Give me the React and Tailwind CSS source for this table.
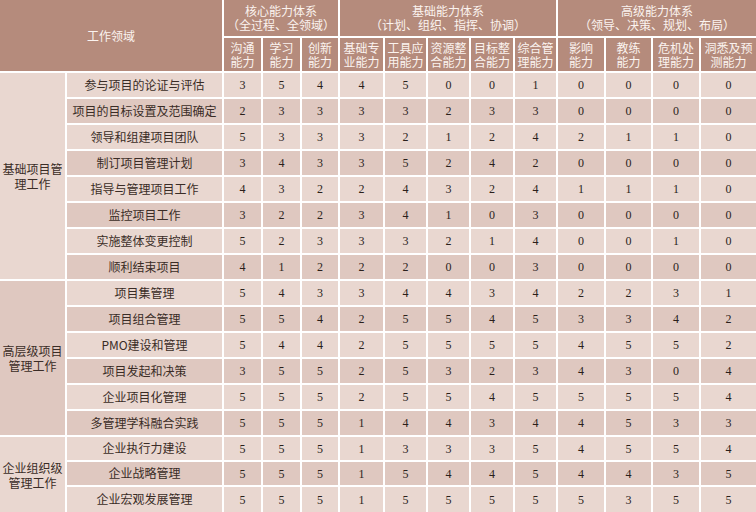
import React from "react";

const groups = [
  {
    name: "基础项目管理工作",
    catBg: "bg-[#e9d7d0]",
    rows: [
      ["参与项目的论证与评估", [3, 5, 4, 4, 5, 0, 0, 1, 0, 0, 0, 0]],
      ["项目的目标设置及范围确定", [2, 3, 3, 3, 3, 2, 3, 3, 0, 0, 0, 0]],
      ["领导和组建项目团队", [5, 3, 3, 3, 2, 1, 2, 4, 2, 1, 1, 0]],
      ["制订项目管理计划", [3, 4, 3, 3, 5, 2, 4, 2, 0, 0, 0, 0]],
      ["指导与管理项目工作", [4, 3, 2, 2, 4, 3, 2, 4, 1, 1, 1, 0]],
      ["监控项目工作", [3, 2, 2, 3, 4, 1, 0, 3, 0, 0, 0, 0]],
      ["实施整体变更控制", [5, 2, 3, 3, 3, 2, 1, 4, 0, 0, 1, 0]],
      ["顺利结束项目", [4, 1, 2, 2, 2, 0, 0, 3, 0, 0, 0, 0]],
    ],
  },
  {
    name: "高层级项目管理工作",
    catBg: "bg-[#dfc8c0]",
    rows: [
      ["项目集管理", [5, 4, 3, 3, 4, 4, 3, 4, 2, 2, 3, 1]],
      ["项目组合管理", [5, 5, 4, 2, 5, 5, 4, 5, 3, 3, 4, 2]],
      ["PMO建设和管理", [5, 4, 4, 2, 5, 5, 5, 5, 4, 5, 5, 2]],
      ["项目发起和决策", [3, 5, 5, 2, 5, 3, 2, 3, 4, 3, 0, 4]],
      ["企业项目化管理", [5, 5, 5, 2, 5, 5, 4, 5, 5, 5, 5, 4]],
      ["多管理学科融合实践", [5, 5, 5, 1, 4, 4, 3, 4, 4, 5, 3, 3]],
    ],
  },
  {
    name: "企业组织级管理工作",
    catBg: "bg-[#e9d7d0]",
    rows: [
      ["企业执行力建设", [5, 5, 5, 1, 3, 3, 3, 5, 4, 5, 5, 4]],
      ["企业战略管理", [5, 5, 5, 1, 5, 4, 4, 5, 4, 4, 3, 5]],
      ["企业宏观发展管理", [5, 5, 5, 1, 5, 5, 5, 5, 5, 3, 5, 5]],
    ],
  },
];

const sub = [
  ["沟通", "能力"],
  ["学习", "能力"],
  ["创新", "能力"],
  ["基础专", "业能力"],
  ["工具应", "用能力"],
  ["资源整", "合能力"],
  ["目标整", "合能力"],
  ["综合管", "理能力"],
  ["影响", "能力"],
  ["教练", "能力"],
  ["危机处", "理能力"],
  ["洞悉及预", "测能力"],
];

const widths = [66, 157, 39, 39, 38, 45, 43, 43, 44, 43, 48, 47, 48, 56];

const cjk = { fontFamily: '"Noto Sans CJK SC", "Noto Sans", sans-serif' };
const serif = { fontFamily: '"Liberation Serif", "Noto Sans CJK SC", serif' };

function Two({ a, b }) {
  return (
    <div className="flex flex-col items-center">
      <span className="block leading-[14px]">{a}</span>
      <span className="block leading-[14px]">{b}</span>
    </div>
  );
}

export default function App() {
  let idx = 0;
  const heights = [];
  for (let i = 0; i < 17; i++) heights.push(i < 14 ? "h-[26px]" : i === 16 ? "h-[26px]" : "h-[25px]");
  return (
    <div className="w-[756px] h-[512px] overflow-hidden bg-[#e9d7d0]">
      <table
        className="w-[756px] table-fixed border-collapse border-hidden text-[12px] leading-[14px]"
        style={cjk}
      >
        <colgroup>
          {widths.map((w, i) => (
            <col key={i} style={{ width: w }} />
          ))}
        </colgroup>
        <thead>
          <tr className="h-[37px] bg-[#b58b7c] text-[#fbf3ef]">
            <th colSpan={2} rowSpan={2} className="border-2 border-white font-normal text-center align-middle">
              工作领域
            </th>
            <th colSpan={3} className="border-2 border-white font-normal text-center align-middle">
              <Two a="核心能力体系" b="（全过程、全领域）" />
            </th>
            <th colSpan={5} className="border-2 border-white font-normal text-center align-middle">
              <Two a="基础能力体系" b="（计划、组织、指挥、协调）" />
            </th>
            <th colSpan={4} className="border-2 border-white font-normal text-center align-middle">
              <Two a="高级能力体系" b="（领导、决策、规划、布局）" />
            </th>
          </tr>
          <tr className="h-[35px] bg-[#b58b7c] text-[#fbf3ef]">
            {sub.map((s, i) => (
              <th key={i} className="border-2 border-white font-normal text-center align-middle px-0">
                <Two a={s[0]} b={s[1]} />
              </th>
            ))}
          </tr>
        </thead>
        <tbody>
          {groups.map((g) =>
            g.rows.map((r, ri) => {
              const h = heights[idx];
              const dark = idx % 2 === 1;
              idx++;
              const bg = dark ? "bg-[#dfc8c0]" : "bg-[#e9d7d0]";
              return (
                <tr key={r[0]} className={`${h} ${bg}`}>
                  {ri === 0 && (
                    <td
                      rowSpan={g.rows.length}
                      className={`border-2 border-white text-center align-middle text-[#3a2c26] px-0 leading-[15px] ${g.catBg}`}
                    >
                      {g.name}
                    </td>
                  )}
                  <td className="border-2 border-white text-center align-middle text-[#3a2c26] whitespace-nowrap px-0" style={serif}>
                    <span style={cjk}>{r[0]}</span>
                  </td>
                  {r[1].map((v, vi) => (
                    <td
                      key={vi}
                      className="border-2 border-white text-center align-middle text-[#2b1f1b] text-[12px]"
                      style={serif}
                    >
                      {v}
                    </td>
                  ))}
                </tr>
              );
            })
          )}
        </tbody>
      </table>
    </div>
  );
}
